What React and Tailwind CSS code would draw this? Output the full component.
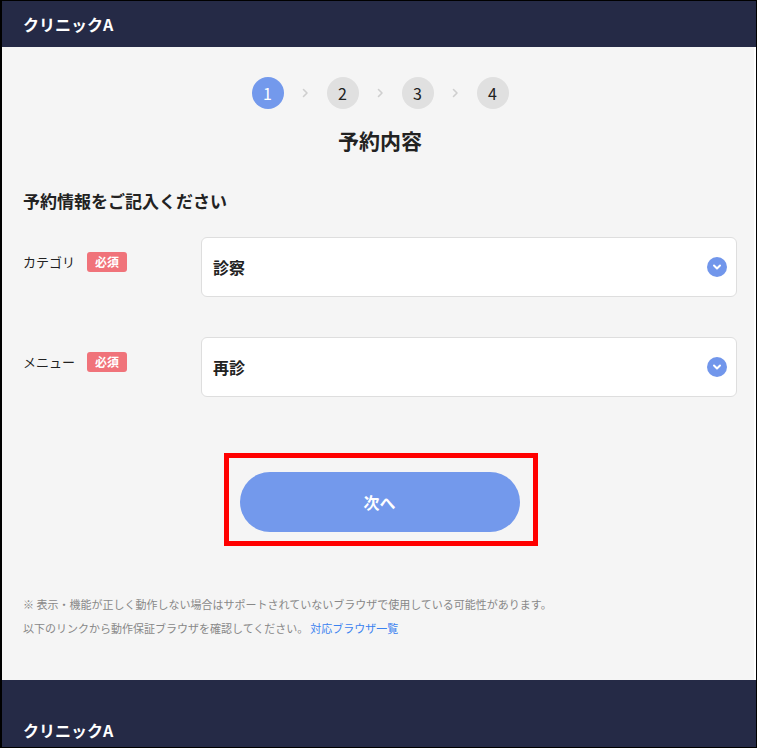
import React from 'react';

const steps = [1, 2, 3, 4];

const fields = [
    { label: 'カテゴリ', value: '診察' },
    { label: 'メニュー', value: '再診' },
];

const StepChevron = () => (
    <svg width="9" height="10" viewBox="0 0 9 10" fill="none">
        <path d="M2.5 1.5L6 5L2.5 8.5" stroke="#cfcfcf" strokeWidth="1.6" strokeLinecap="round" strokeLinejoin="round" />
    </svg>
);

const SelectIcon = () => (
    <span className="flex items-center justify-center w-[20px] h-[20px] rounded-full bg-[#7196eb]">
        <svg width="10" height="8" viewBox="0 0 10 8" fill="none">
            <path d="M2 2.5L5 5.5L8 2.5" stroke="#fff" strokeWidth="2" strokeLinecap="round" strokeLinejoin="round" />
        </svg>
    </span>
);

const SelectField = ({ label, value }) => (
    <div className="flex items-start">
        <div className="w-[178px] shrink-0 flex items-center gap-[12px] pt-[15px]">
            <span className="text-[13px] text-[#222] leading-[20px]">{label}</span>
            <span className="inline-flex items-center justify-center w-[40px] h-[20px] rounded-[3px] bg-[#f0737a] text-white text-[12px] font-bold leading-none">
                必須
            </span>
        </div>
        <div className="flex-1 h-[60px] bg-white border border-[#dedede] rounded-[6px] flex items-center justify-between pl-[11px] pr-[9px]">
            <span className="text-[16px] font-bold text-[#222]">{value}</span>
            <SelectIcon />
        </div>
    </div>
);

export default function App() {
    return (
        <div
            className="w-[757px] h-[748px] flex flex-col border-t border-r border-b border-l-2 border-black overflow-hidden"
            style={{ fontFamily: '"Noto Sans CJK JP", "Noto Sans", sans-serif' }}
        >
            <header className="h-[46px] shrink-0 bg-[#252a46] flex items-center px-[21px]">
                <span className="text-white font-bold text-[16px]">クリニックA</span>
            </header>

            <main className="flex-1 bg-[#f5f5f5] pt-[30px] pl-[21px] pr-[17px] border-r-2 border-white">
                {/* progress steps */}
                <div className="flex items-center justify-center gap-[17px]">
                    {steps.map((n, i) => (
                        <React.Fragment key={n}>
                            {i > 0 && <StepChevron />}
                            <span
                                className={`flex items-center justify-center w-[32px] h-[32px] rounded-full text-[16px] ${
                                    n === 1 ? 'bg-[#7399ec] text-white' : 'bg-[#e0e0e0] text-[#222]'
                                }`}
                            >
                                {n}
                            </span>
                        </React.Fragment>
                    ))}
                </div>

                <h1 className="mt-[16px] text-center text-[21px] font-bold text-[#222] leading-[30px]">予約内容</h1>

                <h2 className="mt-[33px] text-[17px] font-bold text-[#222] leading-[26px]">予約情報をご記入ください</h2>

                <div className="mt-[23px] flex flex-col gap-[40px]">
                    {fields.map((f) => (
                        <SelectField key={f.label} {...f} />
                    ))}
                </div>

                <div className="mt-[56px] flex justify-center pl-[1px]">
                    <div className="border-[5px] border-[#ff0000] pt-[14px] pb-[9px] pl-[11px] pr-[13px]">
                        <button className="block w-[280px] h-[60px] rounded-full bg-[#7399ec] text-white text-[16px] font-bold">
                            次へ
                        </button>
                    </div>
                </div>

                <div className="mt-[46px] text-[11px] text-[#888] leading-[24px]">
                    <p>※ 表示・機能が正しく動作しない場合はサポートされていないブラウザで使用している可能性があります。</p>
                    <p>
                        以下のリンクから動作保証ブラウザを確認してください。
                        <a className="ml-[2px] text-[#3b82f0]">対応ブラウザ一覧</a>
                    </p>
                </div>
            </main>

            <footer className="h-[67px] shrink-0 bg-[#252a46] px-[21px] pt-[38px]">
                <span className="text-white font-bold text-[16px] leading-[24px]">クリニックA</span>
            </footer>
        </div>
    );
}
